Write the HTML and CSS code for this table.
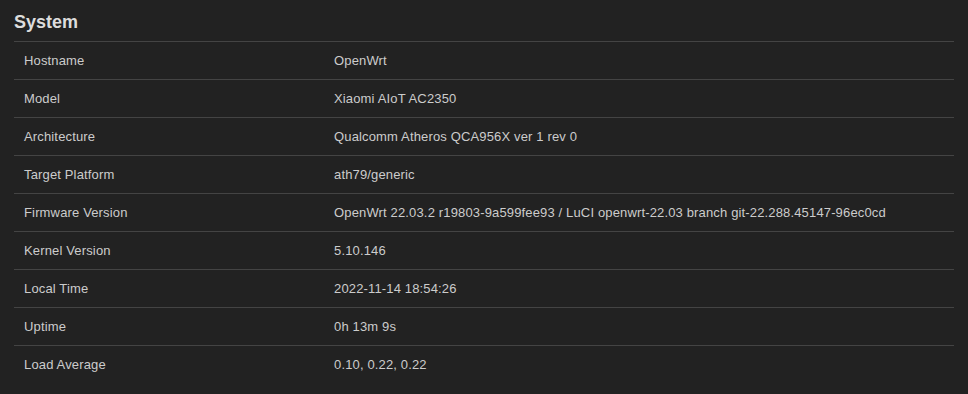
FILE: index.html
```html
<!DOCTYPE html>
<html>
<head>
<meta charset="utf-8">
<link rel="stylesheet" href="styles.css">
</head>
<body>
<div class="section">
  <h2 class="title">System</h2>
  <div class="table">
    <div class="row"><div class="key">Hostname</div><div class="val">OpenWrt</div></div>
    <div class="row"><div class="key">Model</div><div class="val">Xiaomi AIoT AC2350</div></div>
    <div class="row"><div class="key">Architecture</div><div class="val">Qualcomm Atheros QCA956X ver 1 rev 0</div></div>
    <div class="row"><div class="key">Target Platform</div><div class="val">ath79/generic</div></div>
    <div class="row"><div class="key">Firmware Version</div><div class="val">OpenWrt 22.03.2 r19803-9a599fee93 / LuCI openwrt-22.03 branch git-22.288.45147-96ec0cd</div></div>
    <div class="row"><div class="key">Kernel Version</div><div class="val">5.10.146</div></div>
    <div class="row"><div class="key">Local Time</div><div class="val">2022-11-14 18:54:26</div></div>
    <div class="row"><div class="key">Uptime</div><div class="val">0h 13m 9s</div></div>
    <div class="row"><div class="key">Load Average</div><div class="val">0.10, 0.22, 0.22</div></div>
  </div>
</div>
</body>
</html>
```
FILE: styles.css
```css
html, body {
  margin: 0;
  padding: 0;
  background: #222222;
}
body {
  font-family: "Liberation Sans", Arial, sans-serif;
  color: #cccccc;
  height: 394px;
  overflow: hidden;
}
.section {
  padding: 0 14px;
}
.title {
  margin: 0;
  font-size: 18px;
  font-weight: bold;
  line-height: 21px;
  padding: 12px 0 8px;
  color: #dddddd;
}
.row {
  display: grid;
  grid-template-columns: 310px 1fr;
  border-top: 1px solid #444444;
  height: 37px;
  line-height: 37px;
  font-size: 13px;
  letter-spacing: 0.15px;
}
.key, .val {
  padding-left: 10px;
  white-space: nowrap;
}
```
